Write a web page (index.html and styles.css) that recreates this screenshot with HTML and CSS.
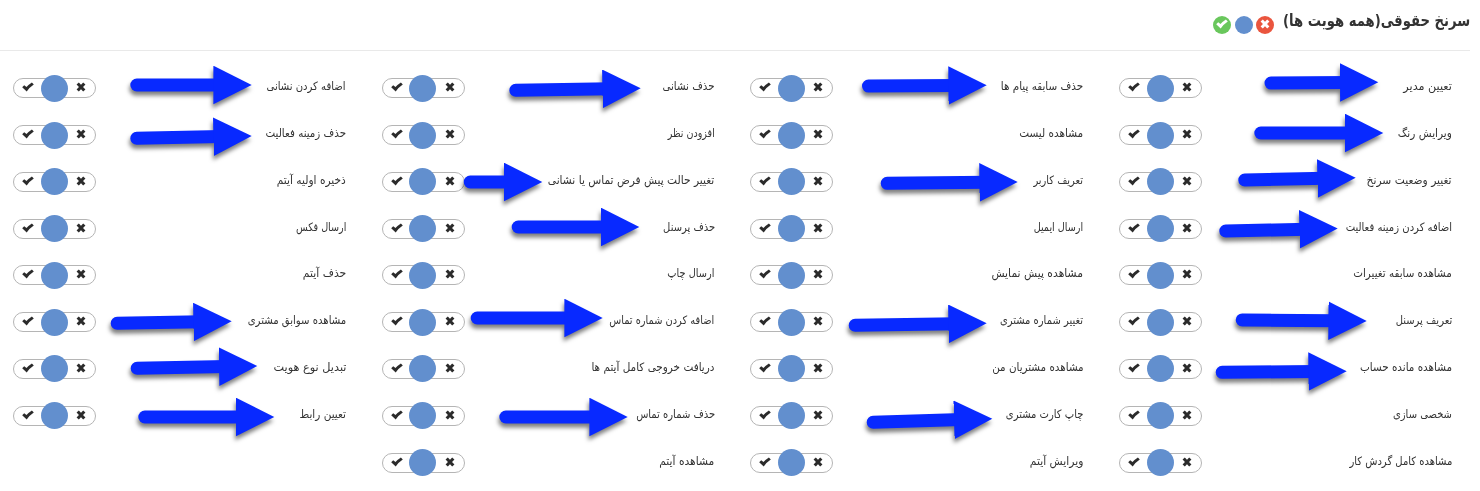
FILE: index.html
```
<!DOCTYPE html>
<html lang="fa" dir="rtl">
<head>
<meta charset="utf-8">
<title>سرنخ حقوقی</title>
<link rel="stylesheet" href="styles.css">
</head>
<body>
<svg class="defs" aria-hidden="true">
  <symbol id="check" viewBox="0 0 12 10"><path d="M.2 5.2 2.2 3.2 4.5 5.1Q7 2.3 9.9.5L11.8 2.5Q7.6 5.3 4.7 9.4z" fill="currentColor"/></symbol>
  <symbol id="cross" viewBox="0 0 10 10"><path d="M1.7 1.5 8.3 8.5M8.3 1.5 1.7 8.5" fill="none" stroke="currentColor" stroke-width="3.1"/></symbol>
</svg>
<header class="header">
  <h1 class="title"><span class="fit" data-width="187">سرنخ حقوقی(همه هویت ها)</span></h1>
  <div class="bulk">
    <span class="dot dot-deny"><svg class="cross"><use href="#cross"/></svg></span>
    <span class="dot dot-neutral"></span>
    <span class="dot dot-allow"><svg class="check"><use href="#check"/></svg></span>
  </div>
</header>
<main class="grid" id="grid"></main>
<svg class="arrows" width="1480" height="491" viewBox="0 0 1480 491">
  <defs>
    <marker id="head" markerUnits="userSpaceOnUse" markerWidth="39" markerHeight="39" refX="8" refY="19.3" orient="auto"><path d="M0 0 38.3 19.3 0 38.6z" fill="#0829ff"/></marker>
  </defs>
  <g id="arrows"></g>
</svg>
<script src="app.js"></script>
</body>
</html>
```
FILE: styles.css
```
* { box-sizing: border-box; }
html, body { margin: 0; }
body {
  width: 1480px;
  height: 491px;
  overflow: hidden;
  background: #fff;
  color: #333;
  font-family: "DejaVu Sans", sans-serif;
}
.defs { display: none; }
.header {
  display: flex;
  align-items: center;
  gap: 9px;
  height: 51px;
  margin-right: 10px;
  border-bottom: 1px solid #e9e9e9;
}
.title {
  margin: 0;
  padding-bottom: 9px;
  font-size: 16.5px;
  line-height: 24px;
  font-weight: bold;
  white-space: nowrap;
}
.fit { display: block; }
.fit span { display: inline-block; white-space: nowrap; transform-origin: right center; }
.bulk { display: flex; gap: 3.5px; }
.dot {
  display: flex;
  align-items: center;
  justify-content: center;
  width: 18px;
  height: 18px;
  border-radius: 50%;
  color: #fff;
  padding-bottom: 2px;
}
.dot-deny { background: #ea553e; }
.dot-neutral { background: #628fce; }
.dot-allow { background: #69c75c; }
.grid {
  display: grid;
  grid-template-columns: repeat(4, 333px);
  grid-auto-rows: 46.78px;
  justify-content: space-between;
  padding: 14px 28px 0 13px;
}
.item {
  display: flex;
  align-items: center;
  justify-content: space-between;
}
.label {
  padding-bottom: 4px;
  font-size: 11.5px;
  line-height: 16px;
  color: #333;
}
.switch {
  display: flex;
  align-items: center;
  justify-content: space-between;
  width: 83px;
  height: 20px;
  padding: 0 9px 0 8px;
  border: 1px solid #b5b5b5;
  border-radius: 10px;
  color: #2b2b2b;
}
.knob {
  flex: none;
  width: 27px;
  height: 27px;
  margin-right: 2px;
  border-radius: 50%;
  background: #628fce;
}
.check { width: 12px; height: 10px; }
.cross { width: 10px; height: 10px; }
.switch .check, .switch .cross { margin-bottom: 2px; }
.arrows {
  position: absolute;
  left: 0;
  top: 0;
  pointer-events: none;
}
.arrow {
  stroke: #0829ff;
  stroke-width: 13px;
  stroke-linecap: round;
  filter: drop-shadow(-1px 4px 2px rgba(0, 0, 0, .5));
}
```
FILE: app.js
```
// Rows of permissions, right to left: [label, label width]
const rows = [
  [["تعیین مدیر", 48.5], ["حذف سابقه پیام ها", 82.5], ["حذف نشانی", 52], ["اضافه کردن نشانی", 79]],
  [["ویرایش رنگ", 54], ["مشاهده لیست", 64], ["افزودن نظر", 47], ["حذف زمینه فعالیت", 80.5]],
  [["تغییر وضعیت سرنخ", 85], ["تعریف کاربر", 49.5], ["تغییر حالت پیش فرض تماس یا نشانی", 166.5], ["ذخیره اولیه آیتم", 69]],
  [["اضافه کردن زمینه فعالیت", 106.5], ["ارسال ایمیل", 49.5], ["حذف پرسنل", 52], ["ارسال فکس", 50.5]],
  [["مشاهده سابقه تغییرات", 98.5], ["مشاهده پیش نمایش", 91.5], ["ارسال چاپ", 47], ["حذف آیتم", 43.5]],
  [["تعریف پرسنل", 56.5], ["تغییر شماره مشتری", 83], ["اضافه کردن شماره تماس", 105], ["مشاهده سوابق مشتری", 98.5]],
  [["مشاهده مانده حساب", 92], ["مشاهده مشتریان من", 91.5], ["دریافت خروجی کامل آیتم ها", 123], ["تبدیل نوع هویت", 73]],
  [["شخصی سازی", 59], ["چاپ کارت مشتری", 77.5], ["حذف شماره تماس", 79], ["تعیین رابط", 46.5]],
  [["مشاهده کامل گردش کار", 103], ["ویرایش آیتم", 53.5], ["مشاهده آیتم", 55]]
];
document.getElementById("grid").innerHTML = rows.flat().map(([text, width]) => `
  <div class="item">
    <div class="label"><span class="fit" data-width="${width}">${text}</span></div>
    <div class="switch"><svg class="cross"><use href="#cross"/></svg><span class="knob"></span><svg class="check"><use href="#check"/></svg></div>
  </div>`).join("");

document.querySelectorAll(".fit").forEach(el => {
  const inner = document.createElement("span");
  inner.textContent = el.textContent;
  el.replaceChildren(inner);
  const width = Number(el.dataset.width);
  const natural = inner.getBoundingClientRect().width;
  inner.style.transform = `scaleX(${width / natural})`;
  el.style.width = `${width}px`;
});

// Arrows: tail x, tail y, tip x, tip y
const arrows = [
  [1264.5, 83, 1378.3, 82.3], [1254.3, 133, 1383.3, 133], [1238.3, 180, 1355.7, 177.7],
  [1219.3, 231, 1337.7, 228.5], [1235.7, 320, 1366.7, 321], [1215.7, 372.3, 1346.7, 371.2],
  [862, 86, 986.7, 85.2], [880.7, 183.3, 1017.7, 182], [848.7, 325.3, 986.7, 323.3],
  [866.7, 422.3, 992.3, 418.7], [509.3, 90.3, 640.7, 88.3], [463.7, 182, 542.3, 182],
  [511.7, 227, 639.3, 227], [470.7, 318, 602.7, 318], [499.3, 417, 627.7, 417],
  [130.3, 85, 251.7, 85], [130.3, 138.3, 251.7, 136], [110.7, 323.3, 231.7, 321.3],
  [130.7, 368.3, 257.3, 366], [138.3, 417, 274.3, 417]
];
document.getElementById("arrows").innerHTML = arrows.map(([x1, y1, x2, y2]) => {
  const slope = (y2 - y1) / (x2 - x1);
  return `<g class="arrow"><path d="M${x1 + 6.5} ${y1}L${x2 - 30.3} ${y2 - 30.3 * slope}" marker-end="url(#head)"/></g>`;
}).join("");
```
